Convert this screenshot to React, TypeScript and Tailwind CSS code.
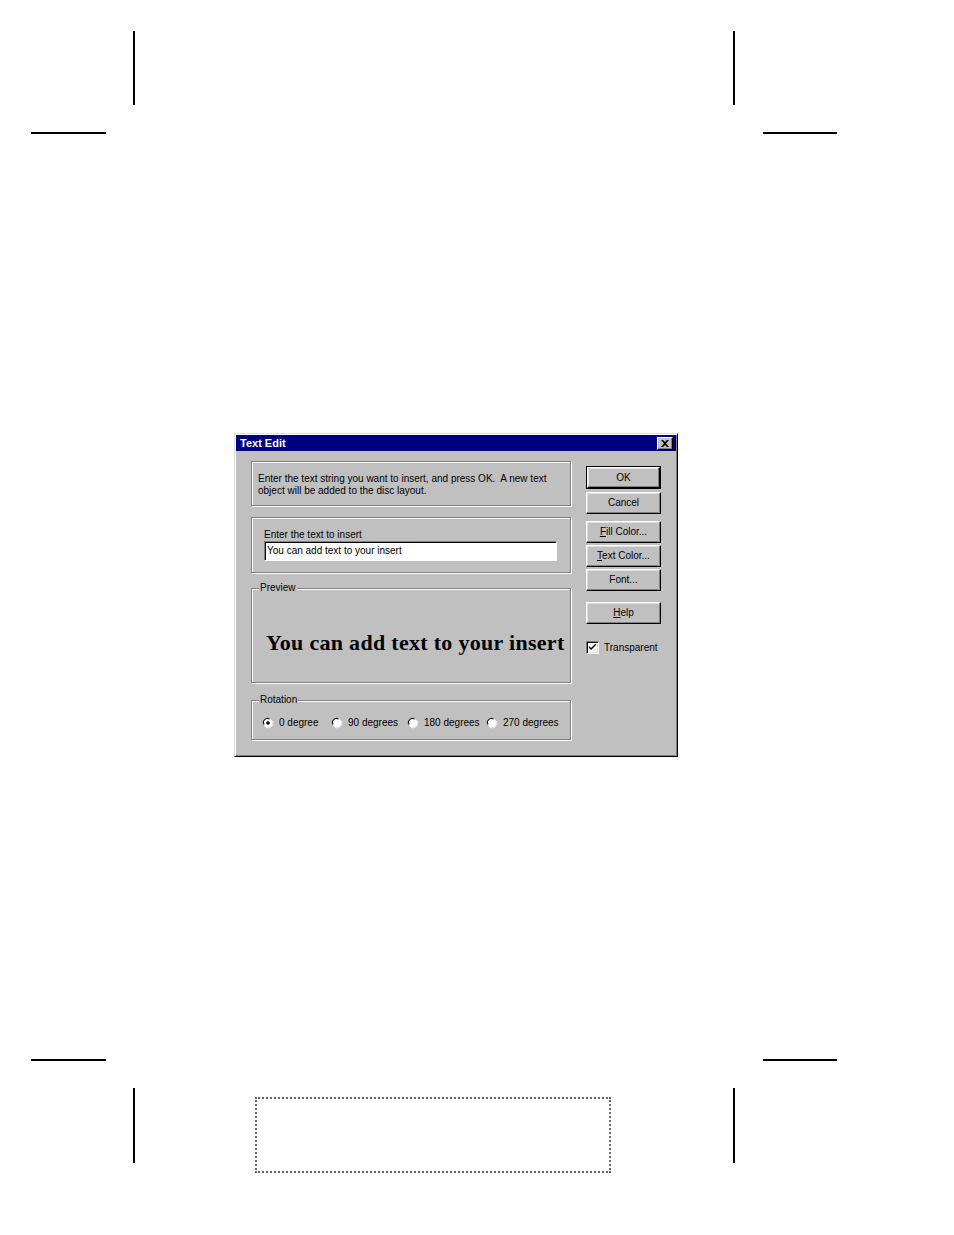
import React from "react";

const FONT = { fontFamily: '"Liberation Sans", Arial, sans-serif' };

function Btn({ children, def = false, mt = "" }: { children: React.ReactNode; def?: boolean; mt?: string }) {
  const inner = (
    <div className="flex h-full w-full items-center justify-center border border-t-white border-l-white border-r-black border-b-black bg-[#c0c0c0] text-[10px] leading-[12px] text-black shadow-[inset_-1px_-1px_0_#808080,inset_1px_1px_0_#dfdfdf]">
      {children}
    </div>
  );
  if (def) {
    return <div className={`h-[23px] w-[75px] border border-black ${mt}`}>{inner}</div>;
  }
  return <div className={`h-[22px] w-[75px] ${mt}`}>{inner}</div>;
}

function Group({ label, className, children }: { label?: string; className: string; children: React.ReactNode }) {
  return (
    <div className={`relative border border-[#808080] shadow-[inset_1px_1px_0_#fff,1px_1px_0_#fff] ${className}`}>
      {label && (
        <span className="absolute -top-[7px] left-[7px] bg-[#c0c0c0] px-[1px] text-[10px] leading-[12px] text-black">
          {label}
        </span>
      )}
      {children}
    </div>
  );
}

function Radio({ checked = false }: { checked?: boolean }) {
  return (
    <svg width="12" height="12" viewBox="0 0 12 12" className="shrink-0">
      <path d="M8 1.5 A5 5 0 0 0 1.5 8" stroke="#808080" strokeWidth="1" fill="none" />
      <path d="M10.5 4 A5 5 0 0 1 4 10.5" stroke="#ffffff" strokeWidth="1" fill="none" />
      <circle cx="6" cy="6" r="4.5" fill="#fff" />
      <path d="M7.5 2 A4 4 0 0 0 2 7.5" stroke="#000" strokeWidth="1" fill="none" />
      <path d="M10 4.5 A4 4 0 0 1 4.5 10" stroke="#dfdfdf" strokeWidth="1" fill="none" />
      {checked && <circle cx="6" cy="6" r="1.8" fill="#000" />}
    </svg>
  );
}

function RadioItem({ label, checked, w }: { label: string; checked?: boolean; w: string }) {
  return (
    <div className={`flex items-center ${w}`}>
      <Radio checked={checked} />
      <span className="ml-[5px] text-[10px] leading-[12px] text-black">{label}</span>
    </div>
  );
}

export default function App() {
  return (
    <div className="relative h-[1235px] w-full overflow-hidden bg-white" style={FONT}>
      {/* crop marks */}
      <div className="absolute left-[133px] top-[31px] h-[74px] w-[2px] bg-black" />
      <div className="absolute left-[31px] top-[132px] h-[2px] w-[75px] bg-black" />
      <div className="absolute left-[733px] top-[31px] h-[74px] w-[2px] bg-black" />
      <div className="absolute left-[763px] top-[132px] h-[2px] w-[74px] bg-black" />
      <div className="absolute left-[31px] top-[1059px] h-[2px] w-[75px] bg-black" />
      <div className="absolute left-[763px] top-[1059px] h-[2px] w-[74px] bg-black" />
      <div className="absolute left-[133px] top-[1088px] h-[75px] w-[2px] bg-black" />
      <div className="absolute left-[733px] top-[1088px] h-[75px] w-[2px] bg-black" />

      <div className="flex flex-col items-start pt-[433px]">
        {/* dialog */}
        <div className="ml-[234px] h-[324px] w-[444px] border border-t-[#dfdfdf] border-l-[#dfdfdf] border-r-black border-b-black bg-[#c0c0c0] p-[1px] shadow-[inset_1px_1px_0_#fff,inset_-1px_-1px_0_#808080]">
          {/* title bar */}
          <div className="flex h-[16px] items-center justify-between bg-[#000080] pl-[4px] pr-[3px]">
            <span className="text-[11px] font-bold leading-[12px] text-white">Text Edit</span>
            <div className="flex h-[13px] w-[16px] items-center justify-center border border-t-white border-l-white border-r-black border-b-black bg-[#c0c0c0] shadow-[inset_-1px_-1px_0_#808080]">
              <svg width="8" height="7" viewBox="0 0 8 7">
                <path d="M0 0 L2 0 L4 2 L6 0 L8 0 L5 3.5 L8 7 L6 7 L4 5 L2 7 L0 7 L3 3.5 Z" fill="#000" />
              </svg>
            </div>
          </div>

          {/* body */}
          <div className="flex pl-[15px] pt-[10px]">
            <div className="flex w-[320px] flex-col">
              <Group className="h-[45px] pl-[6px] pt-[11px]">
                <p className="whitespace-nowrap text-[10px] leading-[12px] text-black">
                  Enter the text string you want to insert, and press OK.&nbsp; A new text
                  <br />
                  object will be added to the disc layout.
                </p>
              </Group>

              <Group className="mt-[11px] h-[56px] pl-[12px] pt-[11px]">
                <div className="text-[10px] leading-[12px] text-black">Enter the text to insert</div>
                <div className="flex h-[20px] w-[293px] items-center border border-t-[#808080] border-l-[#808080] border-r-white border-b-white bg-white pl-[2px] shadow-[inset_1px_1px_0_#000]">
                  <span className="text-[10px] leading-[12px] text-black">You can add text to your insert</span>
                </div>
              </Group>

              <Group label="Preview" className="mt-[15px] h-[95px] pl-[14px] pt-[42px]">
                <div
                  className="whitespace-nowrap text-[22px] font-bold leading-[24px] tracking-[0.3px] text-black"
                  style={{ fontFamily: '"Liberation Serif", "Times New Roman", serif' }}
                >
                  You can add text to your insert
                </div>
              </Group>

              <Group label="Rotation" className="mt-[17px] h-[40px] pl-[10px] pt-[15px]">
                <div className="flex h-[13px] items-center">
                  <RadioItem label="0 degree" checked w="w-[69px]" />
                  <RadioItem label="90 degrees" w="w-[76px]" />
                  <RadioItem label="180 degrees" w="w-[79px]" />
                  <RadioItem label="270 degrees" w="w-[80px]" />
                </div>
              </Group>
            </div>

            <div className="ml-[15px] mt-[5px] flex flex-col">
              <Btn def>OK</Btn>
              <Btn mt="mt-[3px]">Cancel</Btn>
              <Btn mt="mt-[7px]">
                <span>
                  <u>F</u>ill Color...
                </span>
              </Btn>
              <Btn mt="mt-[2px]">
                <span>
                  <u>T</u>ext Color...
                </span>
              </Btn>
              <Btn mt="mt-[2px]">Font...</Btn>
              <Btn mt="mt-[11px]">
                <span>
                  <u>H</u>elp
                </span>
              </Btn>
              <div className="mt-[17px] flex items-center">
                <div className="flex h-[13px] w-[13px] items-center justify-center border border-t-[#808080] border-l-[#808080] border-r-white border-b-white bg-white shadow-[inset_1px_1px_0_#000,inset_-1px_-1px_0_#dfdfdf]">
                  <svg width="7" height="7" viewBox="0 0 7 7">
                    <path d="M0 2 L0 4 L2 6 L7 1 L7 -1 L2 4 Z" fill="#000" />
                  </svg>
                </div>
                <span className="ml-[5px] text-[10px] leading-[12px] text-black">Transparent</span>
              </div>
            </div>
          </div>
        </div>

        {/* dotted frame */}
        <div className="ml-[255px] mt-[340px] h-[76px] w-[356px] border-2 border-dotted border-[#666]" />
      </div>
    </div>
  );
}
